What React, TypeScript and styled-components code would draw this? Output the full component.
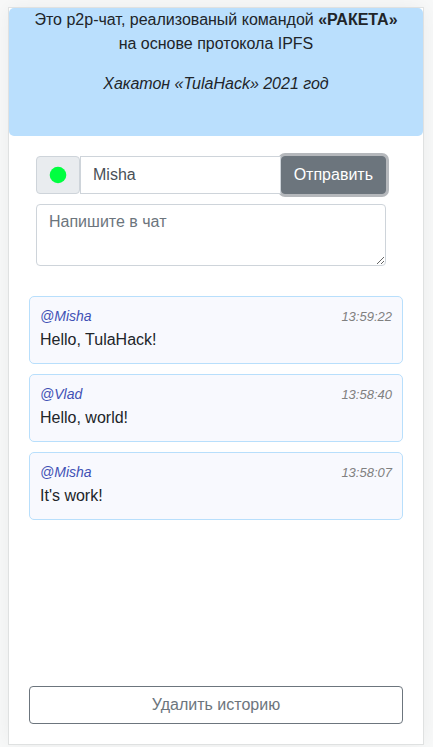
import React, { useState } from "react";
import styled, { createGlobalStyle } from "styled-components";

const GlobalStyle = createGlobalStyle`
  *, *::before, *::after { box-sizing: border-box; }
  body {
    margin: 0;
    background: #f8f9f9;
    color: #212529;
    font-family: "Liberation Sans", Arial, sans-serif;
    font-size: 16px;
    line-height: 24px;
  }
`;

const Page = styled.div`
  display: flex;
  min-height: 100vh;
  padding: 7px 9px 2px 8px;
`;

const Card = styled.main`
  display: flex;
  flex: 1;
  flex-direction: column;
  min-width: 0;
  border: 1px solid #dfe1e1;
  background: #fff;
  box-shadow: 0 0 20px rgba(0, 10, 5, 0.06);
`;

const Banner = styled.header`
  padding-bottom: 40px;
  border-radius: 5px;
  background: #badffd;
  text-align: center;
`;

const BannerText = styled.p`
  margin: 0 0 16px;
  &:last-child { margin: 0; }
`;

const Composer = styled.form`
  display: flex;
  flex-direction: column;
  gap: 10px;
  margin: 20px 37px 30px 27px;
`;

const InputGroup = styled.div`
  display: flex;
  height: 38px;
`;

const Status = styled.span`
  display: flex;
  align-items: center;
  justify-content: center;
  width: 44px;
  border: 1px solid #ced4da;
  border-radius: 4px;
  background: #e9ecef;
`;

const NameInput = styled.input`
  z-index: 1;
  flex: 1;
  min-width: 0;
  padding: 6px 12px;
  border: 1px solid #ced4da;
  border-radius: 0;
  background: #fff;
  color: #495057;
  font: inherit;
  outline: none;
`;

const Button = styled.button<{ $filled?: boolean }>`
  height: 38px;
  padding: 0 12px;
  border: 1px solid #6c757d;
  border-radius: 4px;
  background: ${(p) => (p.$filled ? "#6c757d" : "#fff")};
  color: ${(p) => (p.$filled ? "#fff" : "#6c757d")};
  box-shadow: ${(p) => (p.$filled ? "0 0 0 3px #b5b8bc" : "none")};
  font: inherit;
  cursor: pointer;
`;

const MessageInput = styled.textarea`
  display: block;
  width: 100%;
  height: 62px;
  padding: 5px 12px;
  border: 1px solid #ced4da;
  border-radius: 4px;
  background: #fff;
  color: #495057;
  font: inherit;
  resize: vertical;
  outline: none;
  &::placeholder { color: #6c757d; opacity: 1; }
`;

const History = styled.ul`
  display: flex;
  flex: 1;
  flex-direction: column;
  gap: 10px;
  margin: 0;
  padding: 0 20px 20px;
  list-style: none;
`;

const Message = styled.li`
  padding: 8px 10px 11px;
  border: 1px solid #b8dffc;
  border-radius: 5px;
  background: #f8f9fe;
`;

const MessageHead = styled.div`
  display: flex;
  align-items: baseline;
  justify-content: space-between;
  height: 23px;
  line-height: 22px;
  font-style: italic;
`;

const Author = styled.span`
  color: #3f51b5;
  font-size: 14px;
`;

const Time = styled.time`
  color: #808080;
  font-size: 13px;
`;

const MessageText = styled.p`
  margin: 0;
  overflow-wrap: anywhere;
`;

const Footer = styled.footer`
  display: grid;
  padding: 0 20px 20px;
`;

const initialMessages = [
  { author: "Misha", time: "13:59:22", text: "Hello, TulaHack!" },
  { author: "Vlad", time: "13:58:40", text: "Hello, world!" },
  { author: "Misha", time: "13:58:07", text: "It's work!" },
];

export default function App() {
  const [messages, setMessages] = useState(initialMessages);
  const [name, setName] = useState("Misha");
  const [draft, setDraft] = useState("");

  const send = (event: React.FormEvent) => {
    event.preventDefault();
    if (!draft.trim()) return;
    const time = new Date().toLocaleTimeString("ru-RU");
    setMessages([{ author: name, time, text: draft }, ...messages]);
    setDraft("");
  };

  return (
    <Page>
      <GlobalStyle />
      <Card>
        <Banner>
          <BannerText>
            Это p2p-чат, реализованый командой <b>«РАКЕТА»</b>
            <br />
            на основе протокола IPFS
          </BannerText>
          <BannerText>
            <i>Хакатон «TulaHack» 2021 год</i>
          </BannerText>
        </Banner>
        <Composer onSubmit={send}>
          <InputGroup>
            <Status>
              <svg width="18" height="18" viewBox="0 0 18 18" aria-hidden="true">
                <circle cx="9" cy="9" r="8.3" fill="#00ff40" />
              </svg>
            </Status>
            <NameInput
              aria-label="Имя"
              value={name}
              onChange={(e) => setName(e.target.value)}
            />
            <Button type="submit" $filled>Отправить</Button>
          </InputGroup>
          <MessageInput
            aria-label="Напишите в чат"
            placeholder="Напишите в чат"
            value={draft}
            onChange={(e) => setDraft(e.target.value)}
          />
        </Composer>
        <History>
          {messages.map((m, i) => (
            <Message key={messages.length - i}>
              <MessageHead>
                <Author>@{m.author}</Author>
                <Time>{m.time}</Time>
              </MessageHead>
              <MessageText>{m.text}</MessageText>
            </Message>
          ))}
        </History>
        <Footer>
          <Button type="button" onClick={() => setMessages([])}>Удалить историю</Button>
        </Footer>
      </Card>
    </Page>
  );
}
